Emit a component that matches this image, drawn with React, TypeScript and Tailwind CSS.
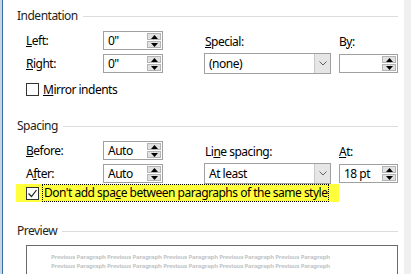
import React from "react";

function Tri({ up }: { up?: boolean }) {
  return (
    <svg width="7" height="4" viewBox="0 0 7 4">
      {up ? <polygon points="0,4 7,4 3.5,0" fill="#000" /> : <polygon points="0,0 7,0 3.5,4" fill="#000" />}
    </svg>
  );
}

function Spin({ value, w }: { value: string; w: string }) {
  return (
    <div className={`flex h-[19px] ${w} border border-[#a0a0a0] bg-white`}>
      <div className="flex-1 pl-[4px] text-[12px] leading-[17px] text-black whitespace-nowrap">{value}</div>
      <div className="flex flex-col w-[14px] my-[1px] mr-[1px] gap-[1px]">
        <div className="flex-1 bg-[#e1e1e1] border border-[#b4b4b4] flex items-center justify-center">
          <Tri up />
        </div>
        <div className="flex-1 bg-[#e1e1e1] border border-[#b4b4b4] flex items-center justify-center">
          <Tri />
        </div>
      </div>
    </div>
  );
}

function Select({ value }: { value: string }) {
  return (
    <div className="flex h-[21px] w-[127px] border border-[#a0a0a0] bg-white">
      <div className="flex-1 pl-[4px] text-[12px] leading-[19px] text-black whitespace-nowrap">{value}</div>
      <div className="w-[16px] bg-[#e6e6e6] border-l border-[#c8c8c8] flex items-center justify-center">
        <svg width="8" height="5" viewBox="0 0 8 5">
          <polyline points="0.5,0.5 4,4 7.5,0.5" fill="none" stroke="#606060" strokeWidth="1" />
        </svg>
      </div>
    </div>
  );
}

function Check({ checked }: { checked?: boolean }) {
  return (
    <div className="w-[13px] h-[13px] shrink-0 border border-[#333333] bg-white flex items-center justify-center">
      {checked && (
        <svg width="11" height="11" viewBox="0 0 11 11">
          <polyline points="1.5,5.5 4.5,8.5 9.5,2" fill="none" stroke="#222" strokeWidth="1.2" />
        </svg>
      )}
    </div>
  );
}

function Header({ title }: { title: string }) {
  return (
    <div className="flex items-center h-[16px] gap-[5px]">
      <span className="text-[12px] leading-[16px] text-[#1e1e1e] whitespace-nowrap">{title}</span>
      <div className="flex-1 h-[1px] bg-[#dcdcdc]" />
    </div>
  );
}

export default function App() {
  const prev = "Previous Paragraph Previous Paragraph Previous Paragraph Previous Paragraph Previous Paragraph";
  return (
    <div className="w-[411px] h-[274px] flex overflow-hidden bg-white font-['Noto_Sans',sans-serif] tracking-[-0.5px] text-black">
      <div className="w-[2px] bg-[#c9d6e4]" />
      <div className="w-[1px] bg-[#3b6ea5]" />
      <div className="flex-1 flex flex-col pl-[14px] pr-[6px] pt-[8px]">
        <Header title="Indentation" />
        {/* Row 1 */}
        <div className="flex h-[19px] mt-[7px] items-center">
          <div className="w-[86px] pl-[9px] text-[12px]">
            <u>L</u>eft:
          </div>
          <Spin value={'0"'} w="w-[60px]" />
          <div className="w-[41px]" />
          <div className="w-[135px] pl-[1px] text-[12px] self-end leading-[16px]">
            <u>S</u>pecial:
          </div>
          <div className="text-[12px] self-end leading-[16px]">
            B<u>y</u>:
          </div>
        </div>
        {/* Row 2 */}
        <div className="flex h-[22px] mt-[3px] items-center">
          <div className="w-[86px] pl-[9px] text-[12px]">
            <u>R</u>ight:
          </div>
          <Spin value={'0"'} w="w-[60px]" />
          <div className="w-[41px]" />
          <Select value="(none)" />
          <div className="w-[8px]" />
          <Spin value="" w="w-[59px]" />
        </div>
        {/* Mirror */}
        <div className="flex h-[13px] mt-[9px] items-center pl-[9px] gap-[4px]">
          <Check />
          <span className="text-[12px] leading-[13px] whitespace-nowrap">
            <u>M</u>irror indents
          </span>
        </div>
        <div className="mt-[22px]">
          <Header title="Spacing" />
        </div>
        {/* Before */}
        <div className="flex h-[19px] mt-[7px] items-center">
          <div className="w-[86px] pl-[9px] text-[12px]">
            <u>B</u>efore:
          </div>
          <Spin value="Auto" w="w-[60px]" />
          <div className="w-[41px]" />
          <div className="w-[135px] pl-[1px] text-[12px] self-end leading-[16px]">
            Li<u>n</u>e spacing:
          </div>
          <div className="text-[12px] self-end leading-[16px]">
            <u>A</u>t:
          </div>
        </div>
        {/* After */}
        <div className="flex h-[21px] mt-[3px] items-center">
          <div className="w-[86px] pl-[9px] text-[12px]">
            A<u>f</u>ter:
          </div>
          <Spin value="Auto" w="w-[60px]" />
          <div className="w-[41px]" />
          <Select value="At least" />
          <div className="w-[8px]" />
          <Spin value="18 pt" w="w-[59px]" />
        </div>
        {/* Highlight */}
        <div className="flex h-[24px] w-[323px] ml-[-1px] items-center bg-[#ffff3c] pl-[10px] gap-[3px]">
          <Check checked />
          <span className="border border-dotted border-black px-[1px] text-[12px] leading-[16px] whitespace-nowrap">
            Don't add spa<u>c</u>e between paragraphs of the same style
          </span>
        </div>
        <div className="mt-[21px]">
          <Header title="Preview" />
        </div>
        <div className="mt-[6px] ml-[9px] h-[60px] shrink-0 border border-[#6a6a6a] pl-[24px] pt-[7px] tracking-[-0.2px]">
          <div className="text-[6px] leading-[9px] font-bold text-[#c4c4c4] whitespace-nowrap">{prev}</div>
          <div className="text-[6px] leading-[9px] font-bold text-[#c4c4c4] whitespace-nowrap">{prev}</div>
        </div>
      </div>
      <div className="w-[7px] bg-[#f0f0f0]" />
    </div>
  );
}
